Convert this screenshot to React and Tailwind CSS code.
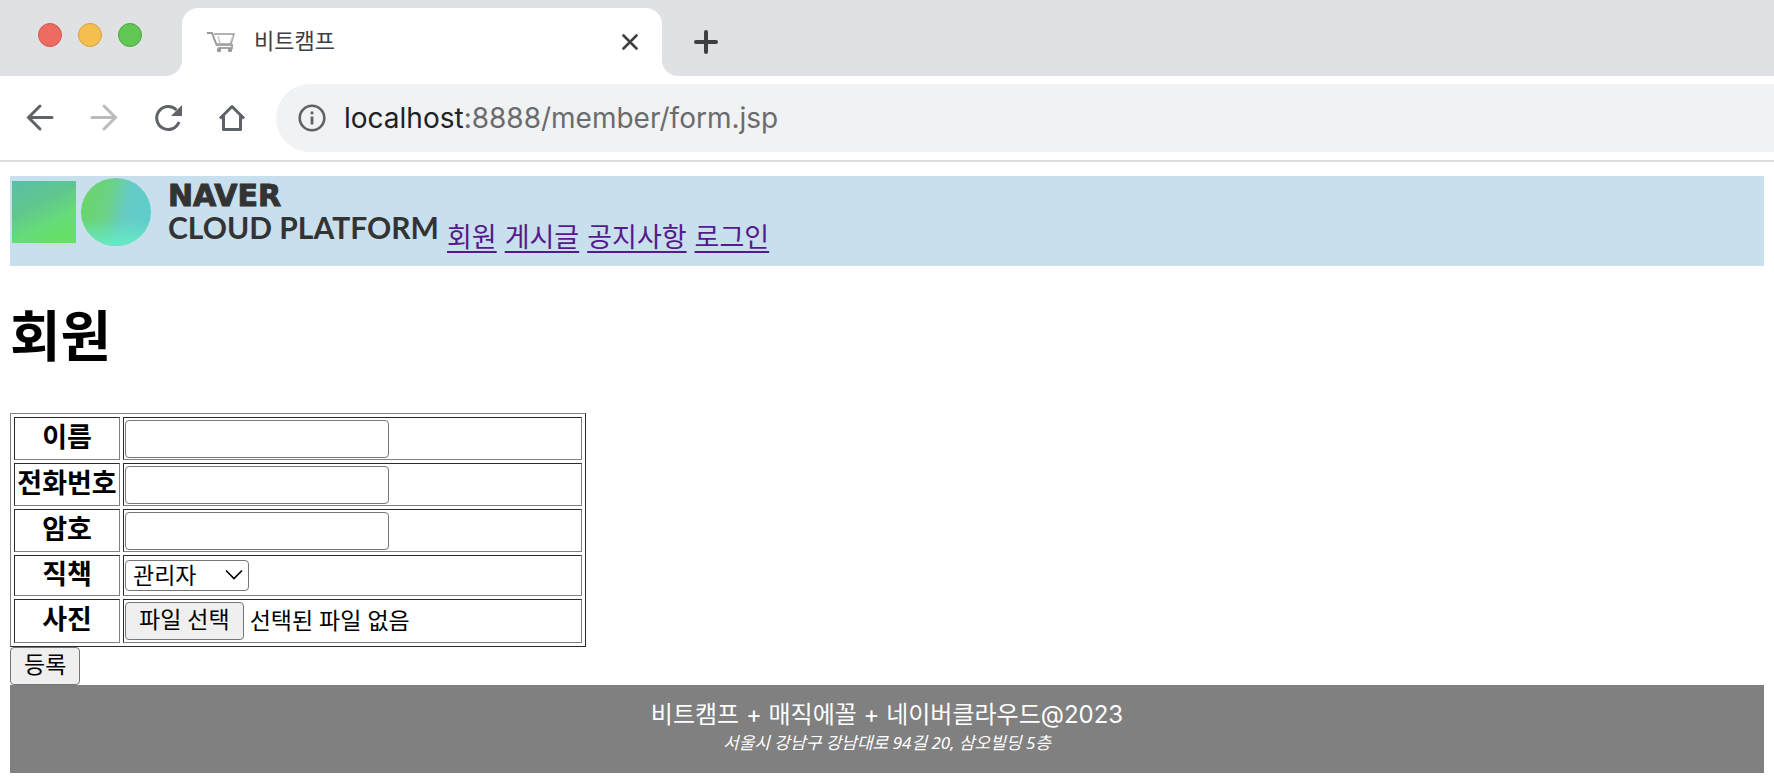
import React, { useRef, useState } from 'react';

const menu = [
  { label: '회원', href: '/member/list.jsp' },
  { label: '게시글', href: '/board/list.jsp' },
  { label: '공지사항', href: '/notice/list.jsp' },
  { label: '로그인', href: '/auth/form.jsp' },
];

const CartIcon = () => (
  <svg width="30" height="22" viewBox="0 0 30 22" fill="none" stroke="#9a9a9a" strokeWidth="1.5">
    <path d="M1 2H6L11 15" strokeWidth="2" />
    <path d="M8 3H28L25 13H11" />
    <path d="M10 14H26V17H12" stroke="#a5a5a5" strokeWidth="2" />
    <path d="M12 5L14 12M27 5L24 12" stroke="#c8c8c8" />
    <circle cx="13" cy="19" r="1.5" fill="#9a9a9a" />
    <circle cx="24" cy="19" r="1.5" fill="#9a9a9a" />
  </svg>
);

const NaverLogo = () => (
  <svg width="433" height="72" viewBox="0 0 433 72" role="img" aria-label="NAVER CLOUD PLATFORM">
    <defs>
      <linearGradient id="square" x1="0.1" y1="0" x2="0.6" y2="1">
        <stop offset="0" stopColor="#5bbfa4" />
        <stop offset="0.4" stopColor="#60c68e" />
        <stop offset="0.75" stopColor="#66dc78" />
        <stop offset="1" stopColor="#66e068" />
      </linearGradient>
      <linearGradient id="circle" x1="0" y1="0.3" x2="1" y2="0.5">
        <stop offset="0" stopColor="#67d667" />
        <stop offset="0.38" stopColor="#6bd287" />
        <stop offset="0.65" stopColor="#66cbc4" />
        <stop offset="1" stopColor="#5ecdcb" />
      </linearGradient>
      <linearGradient id="shine" x1="0.4" y1="0.6" x2="0.4" y2="1">
        <stop offset="0" stopColor="#66ebc4" stopOpacity="0" />
        <stop offset="1" stopColor="#66ebc4" />
      </linearGradient>
    </defs>
    <rect x="2" y="5" width="64" height="62" fill="url(#square)" />
    <ellipse cx="106" cy="36" rx="35" ry="34" fill="url(#circle)" />
    <ellipse cx="106" cy="36" rx="35" ry="34" fill="url(#shine)" />
    <text x="158" y="30" className="fill-[#333] stroke-[#333] stroke-1 font-['DejaVu_Sans',sans-serif] text-[30px] font-bold">NAVER</text>
    <text x="158" y="63" className="fill-[#333] font-['Lato',sans-serif] text-[30px] font-bold">CLOUD PLATFORM</text>
  </svg>
);

const BrowserBar = () => (
  <header className="font-['Inter','Noto_Sans_CJK_KR',sans-serif]">
    <div className="flex h-[76px] items-end bg-[#dfe1e5]">
      <div className="flex h-full w-[166px] items-center gap-4 pl-[38px] pb-[6px]">
        <span className="size-6 rounded-full border border-[#d5584c] bg-[#ed6b60]" />
        <span className="size-6 rounded-full border border-[#d9a13b] bg-[#f5bf4f]" />
        <span className="size-6 rounded-full border border-[#4fa73f] bg-[#62c655]" />
      </div>
      <div className="size-4 bg-white">
        <div className="size-4 rounded-br-2xl bg-[#dfe1e5]" />
      </div>
      <div className="flex h-[68px] w-[480px] items-center rounded-t-2xl bg-white pr-6 pl-6">
        <CartIcon />
        <span className="ml-[18px] flex-1 pb-[2px] text-[22px] leading-8 text-[#3c4043]">비트캠프</span>
        <button type="button" aria-label="탭 닫기">
          <svg width="16" height="16" viewBox="0 0 16 16" stroke="#3c4043" strokeWidth="2.6" strokeLinecap="round">
            <path d="M1.5 1.5L14.5 14.5M14.5 1.5L1.5 14.5" />
          </svg>
        </button>
      </div>
      <div className="size-4 bg-white">
        <div className="size-4 rounded-bl-2xl bg-[#dfe1e5]" />
      </div>
      <button type="button" aria-label="새 탭" className="mb-[22px] ml-4">
        <svg width="24" height="24" viewBox="0 0 24 24" stroke="#3c4043" strokeWidth="4" strokeLinecap="round">
          <path d="M12 2V22M2 12H22" />
        </svg>
      </button>
    </div>

    <div className="flex items-center border-b-2 border-[#dadcdf] bg-white py-2 pl-6">
      <div className="flex gap-8">
        <button type="button" aria-label="뒤로">
          <svg width="32" height="32" viewBox="0 0 32 32" fill="none" stroke="#5f6368" strokeWidth="3" strokeLinecap="round">
            <path d="M28 15.500H4.500M16 4L4.500 15.500L16 27" />
          </svg>
        </button>
        <button type="button" aria-label="앞으로">
          <svg width="32" height="32" viewBox="0 0 32 32" fill="none" stroke="#babbbd" strokeWidth="3" strokeLinecap="round">
            <path d="M4 15.500H27.500M16 4L27.500 15.500L16 27" />
          </svg>
        </button>
        <button type="button" aria-label="새로고침">
          <svg width="32" height="32" viewBox="0 0 32 32" fill="none">
            <path d="M27 20A11.500 11.500 0 1 1 24.500 8" stroke="#5f6368" strokeWidth="3" />
            <path d="M30 3V14H19Z" fill="#5f6368" />
          </svg>
        </button>
        <button type="button" aria-label="홈">
          <svg width="32" height="32" viewBox="0 0 32 32" fill="none" stroke="#5f6368" strokeWidth="3">
            <path d="M4 16.500L16 4.500L28 16.500M7.500 14V27.500H24.500V14" strokeLinejoin="round" />
          </svg>
        </button>
      </div>
      <div className="ml-7 flex h-[68px] flex-1 items-center gap-[18px] rounded-l-full bg-[#f1f2f4] pl-[22px]">
        <svg width="28" height="28" viewBox="0 0 28 28" fill="none" className="shrink-0">
          <circle cx="14" cy="14" r="12.300" stroke="#5f6368" strokeWidth="2.600" />
          <path d="M14 12.500V20.500M14 7.500V10.200" stroke="#5f6368" strokeWidth="2.800" />
        </svg>
        <input
          type="text"
          aria-label="주소"
          className="sr-only"
          defaultValue="localhost:8888/member/form.jsp"
        />
        <div className="text-[28px] leading-8 text-[#6a6b6d]">
          <span className="text-[#202124]">localhost</span>:8888/member/form.jsp
        </div>
      </div>
    </div>
  </header>
);

const Row = ({ id, label, height, children }) => (
  <tr>
    <th
      scope="row"
      className={`${height} w-[106px] border border-t-[#2b2b2b] border-r-[#808080] border-b-[#808080] border-l-[#2b2b2b] px-[2px] pt-0 pb-[6px] text-[27px] leading-8 font-bold whitespace-nowrap`}
    >
      <label htmlFor={id}>{label}</label>
    </th>
    <td className="w-[459px] border border-t-[#2b2b2b] border-r-[#808080] border-b-[#808080] border-l-[#2b2b2b] p-px align-middle">
      {children}
    </td>
  </tr>
);

const MemberForm = () => {
  const fileRef = useRef(null);
  const [fileName, setFileName] = useState('');
  const [formData, setFormData] = useState({ name: '', tel: '', password: '', position: '0' });

  const handleChange = (e) => {
    const { name, value } = e.target;
    setFormData((prev) => ({ ...prev, [name]: value }));
  };

  const handleFile = (e) => {
    setFileName(e.target.files.length ? e.target.files[0].name : '');
  };

  const inputClass = 'block h-[38px] w-[264px] rounded-[4px] border border-[#767676] bg-white px-1 text-[22px]';
  const buttonClass =
    "h-[38px] rounded-[4px] border border-[#767676] bg-[#efefef] px-[13px] pb-1 font-['Noto_Sans','Noto_Sans_CJK_KR',sans-serif] text-[23px] leading-8";

  return (
    <form onSubmit={(e) => e.preventDefault()}>
      <table className="border-separate border-spacing-[3px] border border-t-[#808080] border-r-[#2b2b2b] border-b-[#2b2b2b] border-l-[#808080]">
        <tbody>
          <Row id="name" label="이름" height="h-[43px]">
            <input id="name" type="text" name="name" value={formData.name} onChange={handleChange} className={inputClass} />
          </Row>
          <Row id="tel" label="전화번호" height="h-[43px]">
            <input id="tel" type="text" name="tel" value={formData.tel} onChange={handleChange} className={inputClass} />
          </Row>
          <Row id="password" label="암호" height="h-[43px]">
            <input id="password" type="password" name="password" value={formData.password} onChange={handleChange} className={inputClass} />
          </Row>
          <Row id="position" label="직책" height="h-[41px]">
            <div className="relative w-[124px]">
              <select
                id="position"
                name="position"
                value={formData.position}
                onChange={handleChange}
                className="block h-[31px] w-full appearance-none rounded-[4px] border border-[#767676] bg-white pr-7 pb-1 pl-[7px] text-[23px] leading-6"
              >
                <option value="0">관리자</option>
                <option value="1">일반</option>
              </select>
              <svg width="18" height="12" viewBox="0 0 18 12" fill="none" stroke="#000" strokeWidth="1.600" className="pointer-events-none absolute top-[9px] right-[6px]">
                <path d="M1 1.500L9 9.500L17 1.500" />
              </svg>
            </div>
          </Row>
          <Row id="photo" label="사진" height="h-[44px]">
            <div className="flex items-center gap-[6px]">
              <button type="button" className={buttonClass} onClick={() => fileRef.current.click()}>
                파일 선택
              </button>
              <input id="photo" ref={fileRef} type="file" name="photo" onChange={handleFile} className="hidden" />
              <span className="pb-[2px] font-['Noto_Sans','Noto_Sans_CJK_KR',sans-serif] text-[23px] leading-8">
                {fileName || '선택된 파일 없음'}
              </span>
            </div>
          </Row>
        </tbody>
      </table>
      <button type="submit" className={`block ${buttonClass}`}>
        등록
      </button>
    </form>
  );
};

const App = () => {
  return (
    <div className="min-h-screen bg-white text-black">
      <BrowserBar />
      <main className="px-[10px] pt-[14px] font-['Noto_Sans_CJK_KR',sans-serif]">
        <div className="flex h-[90px] items-start bg-[#c8dfed]">
          <NaverLogo />
          <nav className="flex gap-2 pt-11 pl-1">
            {menu.map((item) => (
              <a key={item.href} href={item.href} className="text-[27px] leading-8 text-[#551a8b] underline decoration-2 underline-offset-4">
                {item.label}
              </a>
            ))}
          </nav>
        </div>
        <h1 className="pt-[30px] pb-[44px] text-[55px] leading-[73px] font-bold">회원</h1>
        <MemberForm />
        <footer className="h-[88px] bg-[#808080] pt-[14px] text-center font-['Noto_Sans','Noto_Sans_CJK_KR',sans-serif] text-white">
          <p className="font-['Inter','Noto_Sans_CJK_KR',sans-serif] text-[24px] leading-8">비트캠프 + 매직에꼴 + 네이버클라우드@2023</p>
          <address className="text-[17px] leading-6">서울시 강남구 강남대로 94길 20, 삼오빌딩 5층</address>
        </footer>
      </main>
    </div>
  );
};

export default App;
